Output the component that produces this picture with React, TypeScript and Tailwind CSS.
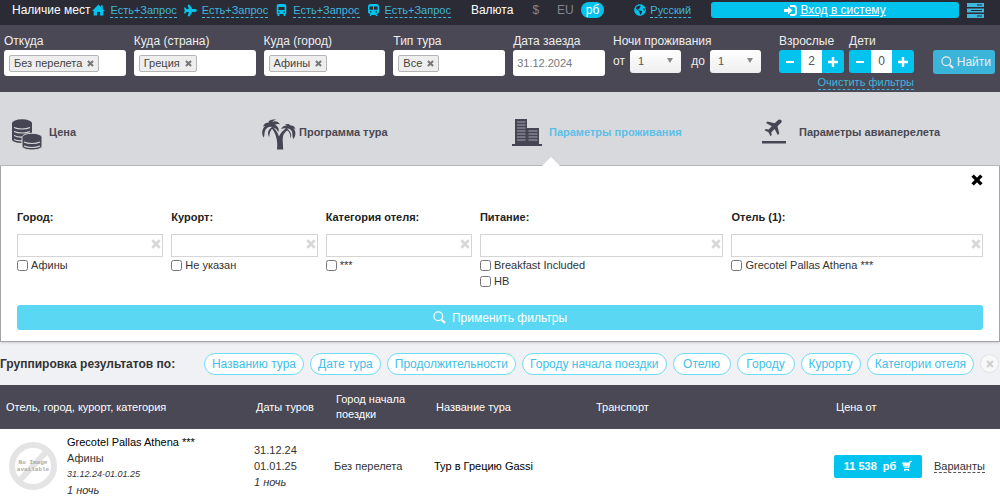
import React from 'react';
import { FaPlane, FaGlobeAmericas } from 'react-icons/fa';

const tagFields = [
  { id: 'from', label: 'Откуда', value: 'Без перелета' },
  { id: 'country', label: 'Куда (страна)', value: 'Греция' },
  { id: 'city', label: 'Куда (город)', value: 'Афины' },
  { id: 'type', label: 'Тип тура', value: 'Все' },
];

const filters = [
  { id: 'f-city', title: 'Город:', options: ['Афины'] },
  { id: 'f-resort', title: 'Курорт:', options: ['Не указан'] },
  { id: 'f-category', title: 'Категория отеля:', options: ['***'] },
  { id: 'f-meal', title: 'Питание:', options: ['Breakfast Included', 'HB'] },
  { id: 'f-hotel', title: 'Отель (1):', options: ['Grecotel Pallas Athena ***'] },
];

const groupings = [
  'Названию тура',
  'Дате тура',
  'Продолжительности',
  'Городу начала поездки',
  'Отелю',
  'Городу',
  'Курорту',
  'Категории отеля',
];

function Cross({ className }: { className: string }) {
  return (
    <svg viewBox="0 0 12 12" className={className} fill="none" stroke="currentColor" strokeWidth="3.4">
      <path d="M1.6 1.6 10.4 10.4M10.4 1.6 1.6 10.4" />
    </svg>
  );
}

function Magnifier({ className }: { className: string }) {
  return (
    <svg viewBox="0 0 14 14" className={className} fill="none" stroke="currentColor">
      <circle cx="5.7" cy="5.7" r="4.7" strokeWidth="1.3" />
      <path d="M9.6 9.6 13 13" strokeWidth="2.4" />
    </svg>
  );
}

function HomeIcon() {
  return (
    <svg viewBox="0 0 13 12" className="h-3 w-[13px] text-[#02c3ee]" fill="currentColor">
      <path d="M6.500.5 9 3V1.300h1.700v3.400L13 7h-1.700v4.500h-3.300V8H5v3.500H1.700V7H0z" />
    </svg>
  );
}

function BusIcon() {
  return (
    <svg viewBox="0 0 13 12" className="h-3 w-[13px] text-[#02c3ee]" fill="currentColor">
      <path
        fillRule="evenodd"
        d="M4 0h5c1.500 0 2.300.8 2.300 2.200V10h-.8v2H8.600v-2H4.400v2H2.500v-2h-.8V2.200C1.700.8 2.500 0 4 0zM3.400 3v3h6.200V3zM3.200 7.500v1.300h1.400V7.500zM8.400 7.500v1.300h1.400V7.500z"
      />
    </svg>
  );
}

function TrainIcon() {
  return (
    <svg viewBox="0 0 13 12" className="h-3 w-[13px] text-[#02c3ee]" fill="currentColor">
      <path
        fillRule="evenodd"
        d="M3.500 0h6c1.500 0 2.500 1 2.500 2.300v5.400c0 1.300-1 2.300-2.500 2.300l1 2H9l-.5-1h-4l-.5 1H2.500l1-2C2 10 1 9 1 7.700V2.300C1 1 2 0 3.500 0zM2.500 2.500v3.300H6V2.500zM7 2.500v3.300h3.500V2.500zM3 7.200v1.300h1.500V7.200zM8.500 7.200v1.300H10V7.200z"
      />
    </svg>
  );
}

function CoinsIcon() {
  return (
    <svg viewBox="0 0 30 31" className="h-[31px] w-[30px]" fill="none">
      <path d="M0 4v16.500c0 2 4.500 3.500 10 3.500s10-1.500 10-3.500V4z" fill="#454554" />
      <ellipse cx="10" cy="4" rx="10" ry="3.700" fill="#454554" />
      <g stroke="#d8d9dc" strokeWidth="1.200">
        <path d="M2 8.500c4 2 12 2 16 0M2 12.500c4 2 12 2 16 0M2 16.500c3 1.500 6 1.700 8.500 1.500M2 20.500c2 1 5 1.500 8 1.400" />
      </g>
      <path d="M10 18.500c0-2.500 4.500-4.200 10-4.200s10 1.700 10 4.200V27c0 2.500-4.500 4-10 4s-10-1.500-10-4z" fill="#454554" stroke="#d8d9dc" />
      <g stroke="#d8d9dc" strokeWidth="1.200">
        <path d="M12 23c4 2 12 2 16 0M12 27c4 2 12 2 16 0" />
      </g>
    </svg>
  );
}

function PalmsIcon() {
  return (
    <svg viewBox="0 0 34 31" className="h-[31px] w-[34px]" fill="#454554">
      <path d="M15 30.500c.5-5 .3-9-1-13-.8-3-2.500-6-4.500-8.500l1.700-1c2.500 3 4.800 6 5.800 9.500 1.500-3.500 4-6.500 7.500-8l.8 1.300c-3.500 2.500-4.800 6-4.600 10.700l.5 9z" />
      <path d="M10 8c-3-1-6 1-7 4-.7 2-.3 4.500-1.300 6.500C-.5 15.500-.5 10.500 3 7c-1 0-1.500.3-2 .8C2 4.500 4.500 3.300 6.500 4 6 1 10 0 14.500.5c-2 .5-3.500 1.200-4.300 2.500 3-1.500 6-.5 7.800 2.500-1.700-.6-3.500-.6-5 .2 3 1.500 4.500 4 3.300 7.500-.8-2.500-3-4.200-5.300-4.700-2.500 3-4 6-3.500 9.500C5 15 5.500 11 10 8z" />
      <path d="M25 9.500c3 0 5 1.500 5.300 4.500.2 2 0 4 1 6 2.500-3 3-7.500.2-10.500 1 0 1.500.2 2 .7C33 7.500 30.500 6 28.500 6.500 27.500 4.500 25 4.500 22.500 5.800c1.200 0 2 .2 2.700.8-2.700-.2-5.200 1-6 3.700 1.500-1 3-1.200 4.500-.8-2 1.500-2.500 3.500-2 6 1-2 2.200-3.500 4-4 2.200 2.200 3 4.800 2.500 8 2-3 1.200-6.500-3.200-10z" />
    </svg>
  );
}

function BuildingsIcon() {
  return (
    <svg viewBox="0 0 30 27" className="h-[27px] w-[30px]" fill="#454554">
      <path d="M3 0h12v9h12v16h3v2H0v-2h3z" />
      <g stroke="#a6a6b0" strokeWidth="1.100">
        <path d="M5 3h8.500M5 6h8.500M5 9h8.500M5 12h8.500M5 15h8.500M5 18h8.500M5 21h8.500M16.500 12h9M16.500 15h9M16.500 18h9M16.500 21h9" />
      </g>
    </svg>
  );
}

function TakeoffIcon() {
  return (
    <svg viewBox="0 0 24 25" className="h-[25px] w-[24px]" fill="#454554">
      <path d="M19.300 1.200c-1-1-2.700-.8-4 .5l-2.600 2.600L5.500 2.500 4 4l5.800 3.200-3.200 3.300-2.900-.4L2.500 11.300l4 2 2 4 1.200-1.200-.4-2.900 3.300-3.200L15.800 16l1.500-1.500-1.800-7.300 3.100-3c1.200-1.100 1.600-2.200.7-3z" />
      <path d="M0 22h24v2.500H0z" />
    </svg>
  );
}

const sources = [
  { id: 'hotel', icon: <HomeIcon />, label: 'Есть+Запрос' },
  { id: 'plane', icon: <FaPlane className="size-[13px] text-[#02c3ee]" />, label: 'Есть+Запрос' },
  { id: 'bus', icon: <BusIcon />, label: 'Есть+Запрос' },
  { id: 'train', icon: <TrainIcon />, label: 'Есть+Запрос' },
];

const tabs = [
  { id: 'price', title: 'Цена', icon: <CoinsIcon />, active: false },
  { id: 'program', title: 'Программа тура', icon: <PalmsIcon />, active: false },
  { id: 'stay', title: 'Параметры проживания', icon: <BuildingsIcon />, active: true },
  { id: 'flight', title: 'Параметры авиаперелета', icon: <TakeoffIcon />, active: false },
];

function TopBar() {
  return (
    <header className="flex h-[25px] items-center bg-[#2b2b35] pr-4 pb-[5px] pl-3 text-[11px] text-[#41b6dc]">
      <span className="mr-[2px] text-[12px] text-white">Наличие мест</span>
      <div className="flex gap-[7px]">
        {sources.map((source) => (
          <div key={source.id} className="flex items-center gap-[5px]">
            {source.icon}
            <a href="#" className="border-b border-dashed border-[#41b6dc] leading-[14px]">{source.label}</a>
          </div>
        ))}
      </div>
      <span className="ml-5 text-[12px] text-white">Валюта</span>
      <div className="ml-4 flex items-center text-[12px] text-[#85858f]">
        <button type="button" className="px-[3px]">$</button>
        <button type="button" className="ml-3 px-[3px]">EU</button>
        <button type="button" className="ml-1 h-4 rounded-full bg-[#02c3ee] px-[5px] leading-4 text-white">рб</button>
      </div>
      <div className="ml-[30px] flex items-center gap-1">
        <FaGlobeAmericas className="size-3 text-[#02c3ee]" />
        <a href="#" className="border-b border-dashed border-[#41b6dc] leading-[14px]">Русский</a>
      </div>
      <button type="button" className="ml-5 flex h-4 flex-1 items-center justify-center gap-[3px] rounded-[3px] bg-[#02c3ee] text-[12px] text-white">
        <svg viewBox="0 0 13 11" className="h-[11px] w-[13px]" fill="none" stroke="currentColor" strokeWidth="1.800">
          <path d="M6 1h3.500Q12 1 12 3.500v4Q12 10 9.500 10H6" />
          <path d="M0 4h4V1.500L8.500 5.500 4 9.500V7H0z" fill="currentColor" stroke="none" />
        </svg>
        <span className="underline">Вход в систему</span>
      </button>
      <button type="button" aria-label="Меню" className="ml-2">
        <svg viewBox="0 0 17 15" className="h-[15px] w-[17px]">
          <path d="M0 0h17v4H0zM0 5.500h17v4H0zM0 11h17v4H0z" fill="#41b6dc" />
          <path d="M10 2h5M4 7.500h11M10 13h5" stroke="#2b2b35" />
        </svg>
      </button>
    </header>
  );
}

function NightsSelect({ id, label }: { id: string; label: string }) {
  return (
    <div className="flex items-center">
      <label htmlFor={id} className="mr-[5px]">{label}</label>
      <div className="relative">
        <select id={id} defaultValue="1" className="h-[23px] w-[51px] appearance-none rounded-[3px] bg-linear-to-b from-white to-[#eeeeee] pl-2 text-[11px] text-[#555555]">
          <option>1</option>
          <option>2</option>
          <option>3</option>
        </select>
        <svg viewBox="0 0 6 5" className="pointer-events-none absolute top-2 right-2 h-[5px] w-[6px]" fill="#888888">
          <path d="M0 0h6L3 5z" />
        </svg>
      </div>
    </div>
  );
}

function Counter({ id, label, value }: { id: string; label: string; value: string }) {
  return (
    <div className="w-[65px]">
      <label htmlFor={id} className="block whitespace-nowrap">{label}</label>
      <div className="flex h-[23px] overflow-hidden rounded-[3px] bg-[#02c3ee]">
        <button type="button" aria-label="Меньше" className="flex w-[22px] items-center justify-center">
          <span className="h-[2px] w-2 bg-white" />
        </button>
        <input id={id} defaultValue={value} className="w-[21px] bg-white text-center text-[12px] text-[#555555]" />
        <button type="button" aria-label="Больше" className="flex w-[22px] items-center justify-center">
          <svg viewBox="0 0 10 10" className="size-[10px]" stroke="#fff" strokeWidth="2.400">
            <path d="M5 0v10M0 5h10" />
          </svg>
        </button>
      </div>
    </div>
  );
}

function SearchForm() {
  return (
    <form className="flex h-[67px] bg-[#494854] pt-2 pr-[5px] pl-1 text-[12px] leading-[17px] text-[#eeeeee]">
      <div className="flex flex-1 gap-2">
        {tagFields.map((field) => (
          <div key={field.id} className={field.id === 'type' ? 'flex-[112]' : 'flex-[122]'}>
            <div className="whitespace-nowrap">{field.label}</div>
            <div className="flex h-[26px] items-center rounded-[3px] bg-white pl-[5px]">
              <span className="flex h-[17px] items-center gap-[5px] rounded-[2px] border border-[#b5b5b5] bg-[#eeeeee] px-1 text-[11px] whitespace-nowrap text-[#444444]">
                {field.value}
                <button type="button" aria-label="Убрать">
                  <Cross className="size-[7px] text-[#777777]" />
                </button>
              </span>
            </div>
          </div>
        ))}
        <div className="flex-[92]">
          <label htmlFor="date" className="block whitespace-nowrap">Дата заезда</label>
          <input id="date" defaultValue="31.12.2024" className="h-[26px] w-full rounded-[3px] bg-white px-1 text-[11px] text-[#777777]" />
        </div>
      </div>
      <div className="ml-2 w-[148px]">
        <div>Ночи проживания</div>
        <div className="flex justify-between">
          <NightsSelect id="nights-from" label="от" />
          <NightsSelect id="nights-to" label="до" />
        </div>
      </div>
      <div className="ml-[18px]">
        <div className="flex gap-[5px]">
          <Counter id="adults" label="Взрослые" value="2" />
          <Counter id="children" label="Дети" value="0" />
        </div>
        <div className="flex justify-end pt-[3px] text-[11px] leading-[13px] text-[#41b6dc]">
          <a href="#" className="border-b border-dashed border-[#41b6dc]">Очистить фильтры</a>
        </div>
      </div>
      <button type="submit" className="mt-[17px] ml-[19px] flex h-6 w-[62px] items-center justify-end gap-[3px] rounded-[3px] bg-[#3bb4da] pr-1">
        <Magnifier className="size-[13px]" />
        Найти
      </button>
    </form>
  );
}

function Tabs() {
  return (
    <nav className="grid h-[74px] grid-cols-4 border-b border-[#bbbbbf] bg-[#d8d9dc] text-[11px] leading-[26px] font-bold">
      {tabs.map((tab) => (
        <a
          key={tab.id}
          href="#"
          className={
            tab.active
              ? 'relative flex items-start pt-[27px] pl-3 text-[#5cbfe8]'
              : 'relative flex items-start pt-[27px] pl-3 text-[#494854]'
          }
        >
          <span className="w-[37px]">{tab.icon}</span>
          {tab.title}
          {tab.active && (
            <svg viewBox="0 0 18 10" className="absolute -bottom-px left-[42px] h-[10px] w-[18px]">
              <path d="M0 10 9 1l9 9z" fill="#fff" />
            </svg>
          )}
        </a>
      ))}
    </nav>
  );
}

function FilterPanel() {
  return (
    <section className="relative border-x border-b border-[#a5a5a8] bg-white px-4 pb-[11px] text-[11px] text-[#333333] shadow-sm">
      <div className="flex h-[42px] items-start justify-end pt-2">
        <button type="button" aria-label="Закрыть">
          <Cross className="size-3 text-black" />
        </button>
      </div>
      <div className="grid grid-cols-[146fr_146fr_146fr_243fr_251fr] gap-2">
        {filters.map((filter) => (
          <fieldset key={filter.id}>
            <label htmlFor={filter.id} className="block h-[26px] leading-[18px] font-bold text-[#222222]">{filter.title}</label>
            <div className="relative">
              <input id={filter.id} className="h-[23px] w-full border border-[#d5d5d5] px-1" />
              <button type="button" aria-label="Очистить" className="absolute top-[5px] right-[2px]">
                <Cross className="size-[10px] text-[#d8d8d8]" />
              </button>
            </div>
            {filter.options.map((option) => (
              <label key={option} className="flex h-4 items-center gap-[3px]">
                <input type="checkbox" className="size-[11px]" />
                {option}
              </label>
            ))}
          </fieldset>
        ))}
      </div>
      <button type="button" className="mt-4 flex h-[25px] w-full items-center justify-center gap-[6px] rounded-[3px] bg-[#5ad7f3] text-[12px] text-white">
        <Magnifier className="size-[13px]" />
        Применить фильтры
      </button>
    </section>
  );
}

function Grouping() {
  return (
    <div className="flex h-[43px] items-center justify-between bg-[#f0f1f4] pr-px text-[12px]">
      <span className="font-bold whitespace-nowrap text-[#333333]">Группировка результатов по:</span>
      <div className="flex items-center gap-[6px]">
        {groupings.map((name) => (
          <button key={name} type="button" className="h-[22px] min-w-[58px] rounded-full border border-[#6fdcf5] bg-white px-[7px] whitespace-nowrap text-[#41c0e8]">
            {name}
          </button>
        ))}
        <button type="button" aria-label="Сбросить" className="flex size-[19px] items-center justify-center rounded-full border border-[#e3e3e5] bg-[#f8f8f8]">
          <Cross className="size-2 text-[#d0d0d0]" />
        </button>
      </div>
    </div>
  );
}

function Results() {
  return (
    <table className="w-full table-fixed text-left text-[11px] text-[#333333]">
      <colgroup>
        <col className="w-[25%]" />
        <col className="w-[8%]" />
        <col className="w-[10%]" />
        <col className="w-[16%]" />
        <col className="w-[24%]" />
        <col className="w-[10%]" />
        <col className="w-[7%]" />
      </colgroup>
      <thead className="bg-[#494854] leading-[15px] text-white">
        <tr className="h-11">
          <th className="pl-[6px] font-normal">Отель, город, курорт, категория</th>
          <th className="pl-[6px] font-normal">Даты туров</th>
          <th className="pl-[6px] font-normal">Город начала поездки</th>
          <th className="pl-[6px] font-normal">Название тура</th>
          <th className="pl-[6px] font-normal">Транспорт</th>
          <th className="pl-[6px] font-normal">Цена от</th>
          <th aria-label="Варианты" />
        </tr>
      </thead>
      <tbody className="leading-4">
        <tr className="h-[75px] border-b border-[#eeeeee] bg-white">
          <td className="pl-[9px]">
            <div className="flex items-center gap-[10px]">
              <svg viewBox="0 0 48 48" className="size-12 shrink-0">
                <circle cx="24" cy="24" r="21" fill="none" stroke="#e4e4e4" strokeWidth="6" />
                <path d="M10 39 38 9" stroke="#e4e4e4" strokeWidth="6" />
                <g fill="#aaaaaa" fontFamily="Liberation Mono" fontSize="6" fontWeight="bold" textAnchor="middle">
                  <text x="24" y="22">No Image</text>
                  <text x="24" y="29">available</text>
                </g>
              </svg>
              <div>
                <a href="#" className="text-black">Grecotel Pallas Athena ***</a>
                <div>Афины</div>
                <div className="text-[9px] italic">31.12.24-01.01.25</div>
                <div className="italic">1 ночь</div>
              </div>
            </div>
          </td>
          <td className="pl-1">
            31.12.24
            <br />
            01.01.25
            <br />
            <span className="italic">1 ночь</span>
          </td>
          <td className="pl-1">Без перелета</td>
          <td className="pl-1 text-black">Тур в Грецию Gassi</td>
          <td />
          <td className="pl-1">
            <button type="button" className="flex h-[23px] w-[88px] items-center justify-center gap-[6px] rounded-[2px] bg-[#02c3ee] font-bold text-white">
              <span>11 538</span>
              <span>рб</span>
              <svg viewBox="0 0 10 10" className="size-[10px]" fill="currentColor">
                <path d="M0 1.500h7.300L7.700 0H10v1H8.600L7.200 6.800H2.300V6h4L6.400 5.500H1.300zM2 8h5v1H2zM2 8.500h1.500V10H2zM5.700 8.500h1.500V10H5.700z" />
              </svg>
            </button>
          </td>
          <td className="pl-1">
            <a href="#" className="border-b border-dashed border-[#555555]">Варианты</a>
          </td>
        </tr>
      </tbody>
    </table>
  );
}

export default function App() {
  return (
    <div className="min-h-screen bg-white font-['Liberation_Sans',Arial,sans-serif]">
      <TopBar />
      <SearchForm />
      <Tabs />
      <FilterPanel />
      <Grouping />
      <Results />
    </div>
  );
}
